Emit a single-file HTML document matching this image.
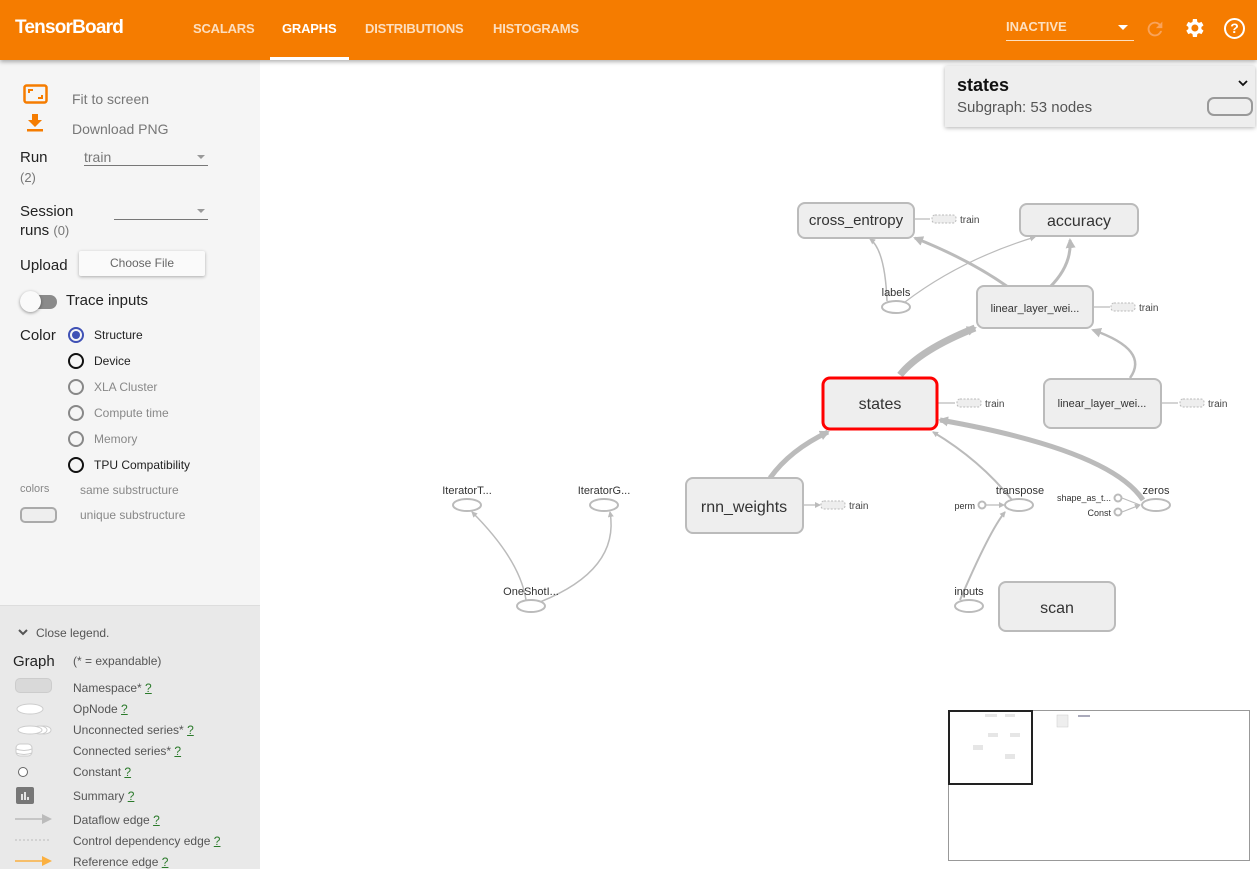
<!DOCTYPE html>
<html><head><meta charset="utf-8"><style>
*{margin:0;padding:0;box-sizing:border-box}
body{width:1257px;height:869px;overflow:hidden;font-family:"Liberation Sans",sans-serif;background:#fff;position:relative}
.top{position:absolute;left:0;top:0;width:1257px;height:60px;background:#f57c00;box-shadow:0 2px 4px rgba(0,0,0,.3);z-index:5}
.top .t{position:absolute;color:#fff;font-weight:bold;font-size:13px;top:21px;opacity:.75;letter-spacing:-0.2px}
.side{position:absolute;left:0;top:60px;width:260px;height:809px;background:#f5f5f5}
.leg{position:absolute;left:0;top:605px;width:260px;height:264px;background:#e9e9e9;border-top:1px solid #ddd}
.a{position:absolute;white-space:nowrap}
.g{color:#777}
.rad{position:absolute;left:68px;width:16px;height:16px;border-radius:50%;border:2px solid #888}
.ll{position:absolute;left:73px;font-size:12px;color:#555}
.ll u{color:#2a7a2a}
</style></head><body>
<div class="top">
<div class="a" style="left:15px;top:17px;color:#fff;font-size:19px;font-weight:bold;letter-spacing:-0.8px">TensorBoard</div>
<div class="t" style="left:193px">SCALARS</div>
<div class="t" style="left:282px;opacity:1">GRAPHS</div>
<div class="t" style="left:365px">DISTRIBUTIONS</div>
<div class="t" style="left:493px">HISTOGRAMS</div>
<div class="a" style="left:270px;top:57px;width:79px;height:3px;background:#fff"></div>
<div class="a" style="left:1006px;top:19px;color:#fde0c0;font-weight:bold;font-size:13px">INACTIVE</div>
<div class="a" style="left:1118px;top:25px;border-left:5px solid transparent;border-right:5px solid transparent;border-top:5px solid #fff"></div>
<div class="a" style="left:1006px;top:40px;width:128px;height:1px;background:#fde0c0"></div>
<svg class="a" style="left:1144px;top:18px" width="22" height="22" viewBox="0 0 24 24"><path d="M17.6 6.4A8 8 0 1 0 19.7 14h-2.1A6 6 0 1 1 12 6c1.7 0 3.1.7 4.2 1.8L13 11h7V4z" fill="#f9a35a"/></svg>
<svg class="a" style="left:1182px;top:16px" width="24" height="24" viewBox="0 0 24 24"><path fill="#fff" d="M19.4 13a7.5 7.5 0 0 0 0-2l2.1-1.6-2-3.5-2.5 1a7.3 7.3 0 0 0-1.7-1L14.9 3h-4l-.4 2.9c-.6.3-1.2.6-1.7 1l-2.5-1-2 3.5L6.4 11a7.5 7.5 0 0 0 0 2l-2.1 1.6 2 3.5 2.5-1c.5.4 1.1.7 1.700 1l.4 2.9h4l.4-2.9c.6-.3 1.2-.6 1.7-1l2.5 1 2-3.5zM12.9 15.5a3.5 3.5 0 1 1 0-7 3.5 3.5 0 0 1 0 7z"/></svg>
<div class="a" style="left:1224px;top:18px;width:21px;height:21px;border:2px solid #fff;border-radius:50%;color:#fff;font-weight:bold;font-size:14px;text-align:center;line-height:17px">?</div>
</div>

<div class="side">
<svg class="a" style="left:23px;top:24px" width="25" height="20"><rect x="1.5" y="1.5" width="22" height="17" rx="2" fill="none" stroke="#f57c00" stroke-width="2.5"/><path d="M6 9V6h4M19 11v3h-4" fill="none" stroke="#f57c00" stroke-width="2"/></svg>
<div class="a g" style="left:72px;top:31px;font-size:14px">Fit to screen</div>
<svg class="a" style="left:26px;top:53px" width="18" height="20"><path d="M6 1h6v6h4l-7 7-7-7h4z" fill="#f57c00"/><rect x="1" y="16" width="16" height="2.5" fill="#f57c00"/></svg>
<div class="a g" style="left:72px;top:61px;font-size:14px">Download PNG</div>
<div class="a" style="left:20px;top:89px;font-size:15px;color:#222">Run</div>
<div class="a g" style="left:20px;top:110px;font-size:13px">(2)</div>
<div class="a g" style="left:84px;top:89px;font-size:14px">train</div>
<div class="a" style="left:197px;top:95px;border-left:4px solid transparent;border-right:4px solid transparent;border-top:4px solid #999"></div>
<div class="a" style="left:84px;top:105px;width:124px;height:1px;background:#777"></div>
<div class="a" style="left:20px;top:143px;font-size:15px;color:#222">Session</div>
<div class="a" style="left:20px;top:162px;font-size:15px;color:#222">runs <span class="g" style="font-size:13px">(0)</span></div>
<div class="a" style="left:197px;top:149px;border-left:4px solid transparent;border-right:4px solid transparent;border-top:4px solid #999"></div>
<div class="a" style="left:114px;top:159px;width:94px;height:1px;background:#777"></div>
<div class="a" style="left:20px;top:197px;font-size:15px;color:#222">Upload</div>
<div class="a" style="left:79px;top:191px;width:126px;height:25px;background:#fafafa;box-shadow:0 1px 3px rgba(0,0,0,.3);border-radius:2px;font-size:12px;color:#666;text-align:center;line-height:25px">Choose File</div>
<div class="a" style="left:22px;top:235px;width:35px;height:14px;border-radius:7px;background:#8a8a8a"></div>
<div class="a" style="left:20px;top:231px;width:21px;height:21px;border-radius:50%;background:#fafafa;box-shadow:0 1px 3px rgba(0,0,0,.4)"></div>
<div class="a" style="left:66px;top:232px;font-size:15px;color:#222">Trace inputs</div>
<div class="a" style="left:20px;top:267px;font-size:15px;color:#222">Color</div>
<div class="rad" style="top:267px;border-color:#3f51b5"><div style="margin:2px;width:8px;height:8px;border-radius:50%;background:#3f51b5"></div></div>
<div class="rad" style="top:293px;border-color:#111"></div>
<div class="rad" style="top:319px"></div>
<div class="rad" style="top:345px"></div>
<div class="rad" style="top:371px"></div>
<div class="rad" style="top:397px;border-color:#111"></div>
<div class="a" style="left:94px;top:268px;font-size:12px;color:#222">Structure</div>
<div class="a" style="left:94px;top:294px;font-size:12px;color:#222">Device</div>
<div class="a g" style="left:94px;top:320px;font-size:12px;color:#888">XLA Cluster</div>
<div class="a g" style="left:94px;top:346px;font-size:12px;color:#888">Compute time</div>
<div class="a g" style="left:94px;top:372px;font-size:12px;color:#888">Memory</div>
<div class="a" style="left:94px;top:398px;font-size:12px;color:#222">TPU Compatibility</div>
<div class="a g" style="left:20px;top:423px;font-size:11px;color:#888">colors</div>
<div class="a g" style="left:80px;top:423px;font-size:12px;color:#888">same substructure</div>
<div class="a" style="left:20px;top:447px;width:37px;height:16px;border:2px solid #aaa;border-radius:5px;background:#eee"></div>
<div class="a g" style="left:80px;top:448px;font-size:12px;color:#888">unique substructure</div>
</div>

<div class="leg">
<svg class="a" style="left:18px;top:23px" width="10" height="8"><path d="M1 1l4 4 4-4" fill="none" stroke="#555" stroke-width="2"/></svg>
<div class="a" style="left:36px;top:20px;font-size:12px;color:#555">Close legend.</div>
<div class="a" style="left:13px;top:47px;font-size:15px;color:#222">Graph</div>
<div class="a" style="left:73px;top:48px;font-size:12px;color:#555">(* = expandable)</div>
<div class="a" style="left:15px;top:72px;width:37px;height:15px;border:1px solid #ccc;border-radius:5px;background:#d9d9d9"></div>
<svg class="a" style="left:14px;top:96px" width="40" height="80">
<ellipse cx="16" cy="7" rx="13" ry="5" fill="#fff" stroke="#ccc"/>
<ellipse cx="30" cy="28" rx="7" ry="4" fill="#fff" stroke="#ccc"/><ellipse cx="26" cy="28" rx="7" ry="4" fill="#fff" stroke="#ccc"/><ellipse cx="16" cy="28" rx="12" ry="4" fill="#fff" stroke="#ccc"/>
<rect x="2" y="42" width="16" height="12" rx="4" fill="#fff" stroke="#ccc"/><path d="M2 47q8 3 16 0M2 51q8 3 16 0" fill="none" stroke="#ccc"/>
<circle cx="9" cy="70" r="4.5" fill="#fff" stroke="#666"/>
</svg>
<svg class="a" style="left:16px;top:181px" width="18" height="17"><rect width="18" height="17" rx="2" fill="#777"/><path d="M6 7v6M9 5v8M12 10v3" stroke="#fff" stroke-width="1.6"/></svg>
<svg class="a" style="left:14px;top:205px" width="40" height="56"><path d="M1 8h30" stroke="#bbb" stroke-width="1.5"/><path d="M28 3l10 5-10 5z" fill="#bbb"/><path d="M1 29h36" stroke="#bbb" stroke-dasharray="2 2"/><path d="M1 50h30" stroke="#fbb040" stroke-width="1.5"/><path d="M28 45l10 5-10 5z" fill="#fbb040"/></svg>
<div class="ll" style="top:75px">Namespace* <u>?</u></div>
<div class="ll" style="top:96px">OpNode <u>?</u></div>
<div class="ll" style="top:117px">Unconnected series* <u>?</u></div>
<div class="ll" style="top:138px">Connected series* <u>?</u></div>
<div class="ll" style="top:159px">Constant <u>?</u></div>
<div class="ll" style="top:183px">Summary <u>?</u></div>
<div class="ll" style="top:207px">Dataflow edge <u>?</u></div>
<div class="ll" style="top:228px">Control dependency edge <u>?</u></div>
<div class="ll" style="top:249px">Reference edge <u>?</u></div>
</div>

<svg class="a" style="left:0;top:0" width="1257" height="869" font-family="Liberation Sans, sans-serif">
<defs><marker id="ar" markerWidth="6" markerHeight="6" refX="5" refY="3" orient="auto" markerUnits="userSpaceOnUse" viewBox="0 0 6 6"><path d="M0 0L6 3 0 6z" fill="#bbb"/></marker>
<marker id="ar2" markerWidth="10" markerHeight="10" refX="8" refY="5" orient="auto" markerUnits="userSpaceOnUse" viewBox="0 0 10 10"><path d="M0 0L10 5 0 10z" fill="#bbb"/></marker></defs>
<g fill="none" stroke="#bbb">
<path d="M900 375Q920 350 975 328" stroke-width="7" marker-end="url(#ar2)"/>
<path d="M770 478Q790 450 828 432" stroke-width="5" marker-end="url(#ar2)"/>
<path d="M1143 500Q1110 450 940 420" stroke-width="5" marker-end="url(#ar2)"/>
<path d="M1008 287Q970 260 915 238" stroke-width="3" marker-end="url(#ar2)"/>
<path d="M1050 287Q1072 265 1070 240" stroke-width="3" marker-end="url(#ar2)"/>
<path d="M1130 378Q1150 350 1093 330" stroke-width="2.5" marker-end="url(#ar2)"/>
<path d="M1012 500Q980 460 933 432" stroke-width="2" marker-end="url(#ar)"/>
<path d="M960 600Q990 530 1005 512" stroke-width="2" marker-end="url(#ar)"/>
<path d="M887 301Q885 250 870 239" stroke-width="1.5" marker-end="url(#ar)"/>
<path d="M905 302Q960 260 1035 237" stroke-width="1.2" marker-end="url(#ar)"/>
<path d="M526 600Q520 560 472 512" stroke-width="1.5" marker-end="url(#ar)"/>
<path d="M540 602Q620 570 610 512" stroke-width="1.5" marker-end="url(#ar)"/>
<path d="M986 505H1004" stroke-width="1.2" marker-end="url(#ar)"/>
<path d="M1122 498L1140 505M1122 512L1140 505" stroke-width="1.2" marker-end="url(#ar)"/>
<path d="M914 219H930M1093 307H1110M938 403H955M1161 403H1178M803 505H820" stroke-width="1.2" marker-end="url(#ar)"/>
</g>
<g fill="#eee" stroke="#bbb" stroke-dasharray="2 1.5"><rect x="932" y="215" width="24" height="8" rx="3"/><rect x="1111" y="303" width="24" height="8" rx="3"/><rect x="957" y="399" width="24" height="8" rx="3"/><rect x="1180" y="399" width="24" height="8" rx="3"/><rect x="821" y="501" width="24" height="8" rx="3"/></g>
<g font-size="10" fill="#444"><text x="960" y="223">train</text><text x="1139" y="311">train</text><text x="985" y="407">train</text><text x="1208" y="407">train</text><text x="849" y="509">train</text></g>
<g fill="#eee" stroke="#bbb" stroke-width="2">
<rect x="798" y="203" width="116" height="35" rx="7"/>
<rect x="1020" y="204" width="118" height="32" rx="7"/>
<rect x="977" y="286" width="116" height="42" rx="7"/>
<rect x="1044" y="379" width="117" height="49" rx="7"/>
<rect x="686" y="478" width="117" height="55" rx="7"/>
<rect x="999" y="582" width="116" height="49" rx="7"/>
</g>
<rect x="823" y="378" width="114" height="51" rx="7" fill="#eee" stroke="#f00" stroke-width="3"/>
<g fill="#fff" stroke="#bbb" stroke-width="2">
<ellipse cx="896" cy="307" rx="14" ry="6"/><ellipse cx="1019" cy="505" rx="14" ry="6"/><ellipse cx="1156" cy="505" rx="14" ry="6"/><ellipse cx="969" cy="606" rx="14" ry="6"/>
<ellipse cx="467" cy="505" rx="14" ry="6"/><ellipse cx="604" cy="505" rx="14" ry="6"/><ellipse cx="531" cy="606" rx="14" ry="6"/>
<circle cx="982" cy="505" r="3.5"/><circle cx="1118" cy="498" r="3.5"/><circle cx="1118" cy="512" r="3.5"/>
</g>
<g fill="#333" text-anchor="middle">
<text x="856" y="225" font-size="15">cross_entropy</text>
<text x="1079" y="226" font-size="16">accuracy</text>
<text x="1035" y="312" font-size="11">linear_layer_wei...</text>
<text x="1102" y="407" font-size="11">linear_layer_wei...</text>
<text x="880" y="409" font-size="16">states</text>
<text x="744" y="512" font-size="16">rnn_weights</text>
<text x="1057" y="613" font-size="16">scan</text>
<text x="896" y="296" font-size="11">labels</text>
<text x="1020" y="494" font-size="11">transpose</text>
<text x="1156" y="494" font-size="11">zeros</text>
<text x="969" y="595" font-size="11">inputs</text>
<text x="467" y="494" font-size="11">IteratorT...</text>
<text x="604" y="494" font-size="11">IteratorG...</text>
<text x="531" y="595" font-size="11">OneShotI...</text>
</g>
<g fill="#333" font-size="9" text-anchor="end"><text x="975" y="509">perm</text><text x="1111" y="501">shape_as_t...</text><text x="1111" y="516">Const</text></g>
<rect x="945" y="66" width="310" height="61" fill="#eee" style="filter:drop-shadow(0 1px 2px rgba(0,0,0,.3))"/>
<text x="957" y="91" font-size="18" font-weight="bold" fill="#111">states</text>
<text x="957" y="112" font-size="15" fill="#555">Subgraph: 53 nodes</text>
<path d="M1239 81l4 4 4-4" fill="none" stroke="#111" stroke-width="1.8"/>
<rect x="1208" y="98" width="44" height="17" rx="6" fill="#eee" stroke="#999" stroke-width="2"/>
<rect x="948.5" y="710.5" width="301" height="150" fill="#fff" stroke="#999"/>
<rect x="949" y="711" width="83" height="73" fill="#fff" stroke="#222" stroke-width="2"/>
<rect x="1057" y="715" width="11" height="12" fill="#eee" stroke="#ccc" stroke-width=".5"/>
<rect x="1078" y="715" width="12" height="2" fill="#aab"/>
<g fill="#e6e6e6"><rect x="985" y="714" width="12" height="3"/><rect x="1005" y="714" width="10" height="3"/><rect x="988" y="733" width="10" height="4"/><rect x="1010" y="733" width="10" height="4"/><rect x="973" y="745" width="10" height="5"/><rect x="1005" y="754" width="10" height="5"/></g>
</svg>
</body></html>
